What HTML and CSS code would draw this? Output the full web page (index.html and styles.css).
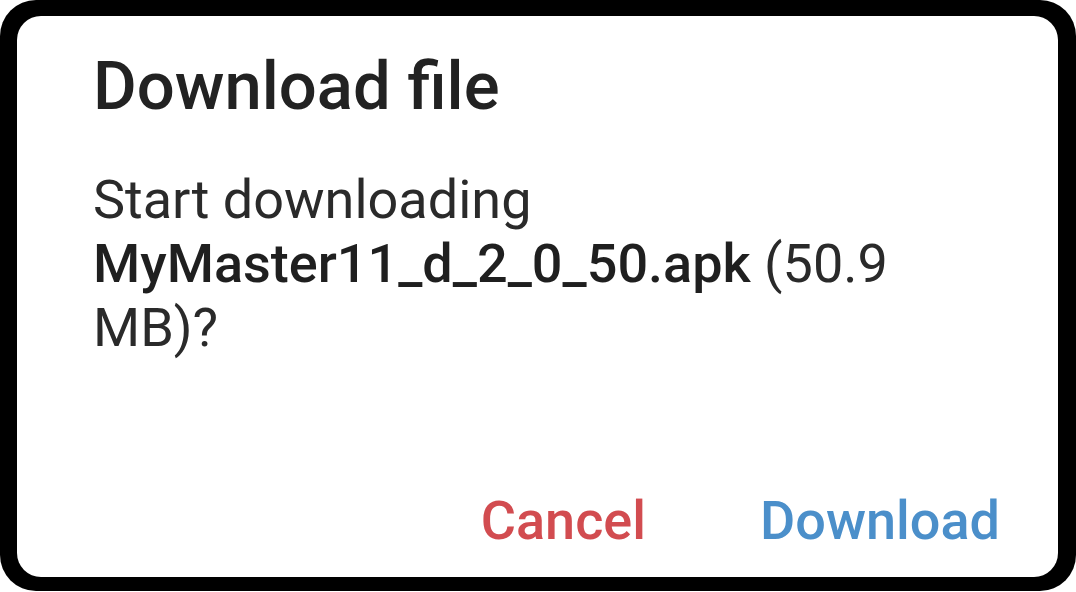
FILE: index.html
```html
<!DOCTYPE html>
<html>
<head>
    <title>Download file</title>
    <link rel="stylesheet" href="styles.css">
</head>
<body>
    <div class="frame">
        <div class="dialog">
            <h1 class="dialog-title">Download file</h1>
            <p class="dialog-message">Start downloading <b>MyMaster11_d_2_0_50.apk</b> (50.9 MB)?</p>
            <div class="dialog-actions">
                <button class="cancel">Cancel</button>
                <button class="confirm">Download</button>
            </div>
        </div>
    </div>
</body>
</html>
```

FILE: styles.css
```css
* {
    margin: 0;
    padding: 0;
    box-sizing: border-box;
    font-family: Roboto, "Noto Sans", sans-serif;
}

body {
    width: 1076px;
    height: 592px;
    background: #fff;
}

.frame {
    height: 591px;
    background: #000;
    border-radius: 36px;
    padding: 16px 18px 14px 17px;
}

.dialog {
    height: 100%;
    background: #fff;
    border-radius: 24px;
    padding: 31px 58px 0 76px;
    display: flex;
    flex-direction: column;
}

.dialog-title {
    font-size: 67px;
    font-weight: 500;
    color: #222;
    line-height: 78px;
}

.dialog-message {
    margin-top: 43px;
    font-size: 54px;
    line-height: 64px;
    color: #2a2a2a;
    max-width: 880px;
}

.dialog-message b {
    font-weight: 500;
    color: #1f1f1f;
}

.dialog-actions {
    margin-top: auto;
    margin-bottom: 26px;
    display: flex;
    justify-content: flex-end;
    gap: 114px;
}

button {
    border: none;
    background: none;
    font-size: 54px;
    font-weight: 500;
    line-height: 60px;
    cursor: pointer;
}

.cancel {
    color: #d24c50;
}

.confirm {
    color: #4b8fca;
}
```
